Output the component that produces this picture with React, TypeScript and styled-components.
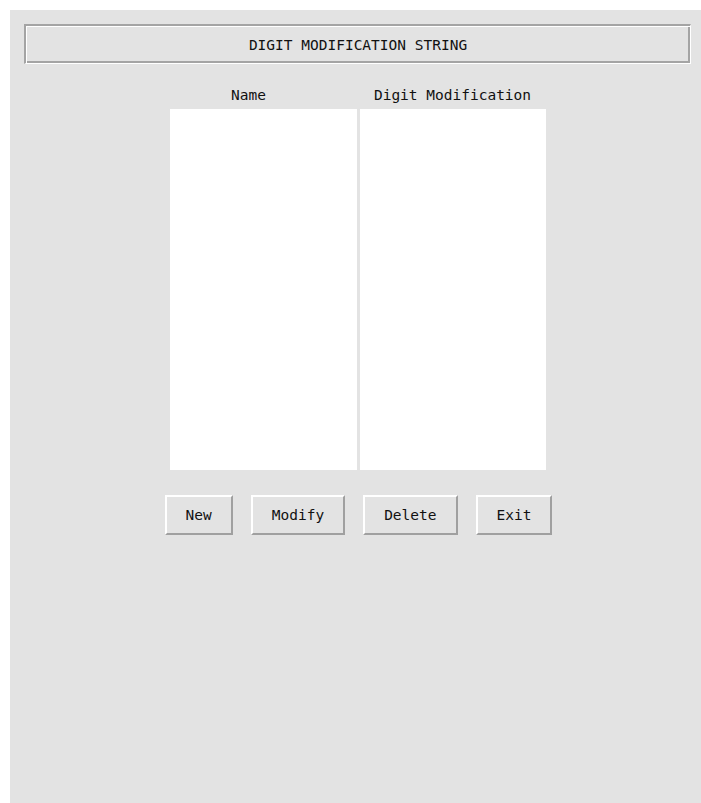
import React from "react";
import styled, { createGlobalStyle } from "styled-components";

const Global = createGlobalStyle`
  html, body {
    margin: 0;
    padding: 0;
    background: #ffffff;
    overflow: hidden;
  }
  body {
    font-family: "DejaVu Sans Mono", "Liberation Mono", monospace;
  }
`;

const Panel = styled.div`
  margin: 10px 0 0 10px;
  width: 695px;
  height: 800px;
  box-sizing: border-box;
  padding: 14px;
  background: #e3e3e3;
  display: flex;
  flex-direction: column;
  align-items: center;
`;

const TitleBar = styled.div`
  align-self: stretch;
  height: 40px;
  box-sizing: border-box;
  border-top: 2px solid #a4a4a4;
  border-left: 2px solid #a4a4a4;
  border-bottom: 1px solid #ffffff;
  border-right: 1px solid #ffffff;
  box-shadow: inset 1px 1px 0 #ffffff, inset -2px -2px 0 #a4a4a4;
  display: flex;
  align-items: center;
  justify-content: center;
  font-size: 14.5px;
  color: #111;
`;

const Columns = styled.div`
  margin-top: 21px;
  display: grid;
  grid-template-columns: 187px 186px;
  column-gap: 3px;
  row-gap: 4px;
`;

const Header = styled.div<{ $shift?: number }>`
  height: 20px;
  line-height: 20px;
  text-align: center;
  font-size: 14.5px;
  color: #111;
  padding-right: ${(p) => p.$shift ?? 0}px;
`;

const ListBox = styled.div`
  height: 361px;
  background: #ffffff;
`;

const ButtonRow = styled.div`
  margin-top: 25px;
  display: flex;
  gap: 18px;
  padding-left: 2px;
`;

const Button = styled.button`
  height: 40px;
  padding: 0 19px;
  box-sizing: border-box;
  background: #e3e3e3;
  border-top: 2px solid #ffffff;
  border-left: 2px solid #ffffff;
  border-bottom: 2px solid #a0a0a0;
  border-right: 2px solid #a0a0a0;
  font-family: "DejaVu Sans Mono", "Liberation Mono", monospace;
  font-size: 14.5px;
  color: #111;
  cursor: pointer;
`;

export default function App() {
  return (
    <>
      <Global />
      <Panel>
        <TitleBar>DIGIT MODIFICATION STRING</TitleBar>
        <Columns>
          <Header $shift={29}>Name</Header>
          <Header>Digit Modification</Header>
          <ListBox />
          <ListBox />
        </Columns>
        <ButtonRow>
          <Button>New</Button>
          <Button>Modify</Button>
          <Button>Delete</Button>
          <Button>Exit</Button>
        </ButtonRow>
      </Panel>
    </>
  );
}
